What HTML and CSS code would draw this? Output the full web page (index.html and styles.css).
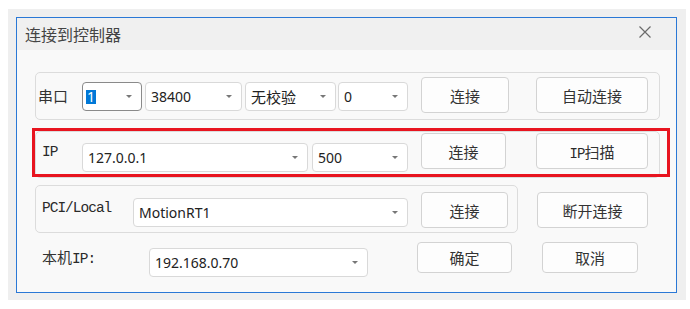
FILE: index.html
```html
<!DOCTYPE html>
<html lang="zh-CN">
<head>
    <meta charset="UTF-8">
    <title>连接到控制器</title>
    <link rel="stylesheet" href="styles.css">
</head>
<body>
    <div class="backdrop">
        <div class="dialog">
            <div class="titlebar">
                <span class="title">连接到控制器</span>
                <svg class="close" width="12" height="12" viewBox="0 0 12 12">
                    <path d="M0.5 0.5 L11.5 11.5 M11.5 0.5 L0.5 11.5" stroke="#6b6b6b" stroke-width="1.2" fill="none"/>
                </svg>
            </div>

            <div class="content">
                <!-- 串口 -->
                <div class="group row-serial">
                    <span class="label">串口</span>
                    <div class="combo combo-port focus"><span class="sel">1</span><i class="arrow"></i></div>
                    <div class="combo combo-baud"><span>38400</span><i class="arrow"></i></div>
                    <div class="combo combo-parity"><span class="cjk">无校验</span><i class="arrow"></i></div>
                    <div class="combo combo-stop"><span>0</span><i class="arrow"></i></div>
                    <button class="btn btn-connect">连接</button>
                    <button class="btn btn-wide">自动连接</button>
                </div>

                <!-- IP -->
                <div class="group row-ip">
                    <span class="label mono">IP</span>
                    <div class="combo combo-ip"><span>127.0.0.1</span><i class="arrow"></i></div>
                    <div class="combo combo-portnum"><span>500</span><i class="arrow"></i></div>
                    <button class="btn btn-connect-ip">连接</button>
                    <button class="btn btn-wide btn-scan"><span class="mono">IP</span>扫描</button>
                </div>

                <!-- PCI/Local -->
                <div class="row-pci">
                    <div class="group group-pci">
                        <span class="label mono">PCI/Local</span>
                        <div class="combo combo-pci"><span>MotionRT1</span><i class="arrow"></i></div>
                        <button class="btn btn-connect-pci">连接</button>
                    </div>
                    <button class="btn btn-disconnect">断开连接</button>
                </div>

                <!-- 本机IP -->
                <div class="row-local">
                    <span class="label">本机<span class="mono">IP:</span></span>
                    <div class="combo combo-local"><span>192.168.0.70</span><i class="arrow"></i></div>
                    <button class="btn btn-ok">确定</button>
                    <button class="btn btn-cancel">取消</button>
                </div>
            </div>

            <div class="highlight"></div>
        </div>
    </div>
</body>
</html>
```

FILE: styles.css
```css
body { margin: 0; background: #fff; font-family: "Noto Sans", "Noto Sans CJK SC", sans-serif; color: #333; }
.backdrop { margin: 9px 4px 9px 8px; padding: 8px 9px 7px 8px; background: #efefef; }

.dialog { position: relative; width: 661px; height: 276px; box-sizing: border-box; border: 1px solid #2a78d6; background: #f9f9f9; }
.titlebar { height: 32px; background: #f0f0f0; display: flex; align-items: center; justify-content: space-between; padding: 0 25px 0 8px; }
.title { font-family: "Noto Sans CJK SC", sans-serif; font-size: 16px; color: #444; }
.close { display: block; margin-top: -4px; }

.content { padding-left: 18px; }

.label { font-family: "Noto Sans CJK SC", sans-serif; font-size: 15px; line-height: 16px; color: #333; flex: none; }
.mono { font-family: "Liberation Mono", monospace; font-size: 14.5px; letter-spacing: -1px; color: #2a2a2a; }
.cjk { font-family: "Noto Sans CJK SC", sans-serif; font-size: 15px; }

.group { box-sizing: border-box; width: 625px; border: 1px solid #dcdcdc; border-radius: 5px; display: flex; align-items: flex-start; }

.combo { box-sizing: border-box; height: 29px; background: #fff; border: 1px solid #d9d9d9; border-radius: 4px; display: flex; align-items: center; justify-content: space-between; padding: 0 9px 0 5px; font-size: 14px; color: #222; flex: none; }
.combo.focus { border-color: #8a8a8a; padding-left: 3px; }
.sel { background: #0078d7; color: #fff; padding: 0 1px; line-height: 14px; }
.arrow { width: 0; height: 0; border-left: 3px solid transparent; border-right: 3px solid transparent; border-top: 3px solid #777; }

.btn { box-sizing: border-box; height: 36px; background: #fdfdfd; border: 1px solid #d3d3d3; border-radius: 4px; font-family: "Noto Sans CJK SC", sans-serif; font-size: 15px; color: #333; padding: 0; flex: none; }
.btn .mono { font-size: 14px; }

/* row 1 */
.row-serial { margin-top: 22px; height: 48px; }
.row-serial .label { margin: 15px 0 0 2px; width: 44px; }
.row-serial .combo { margin-top: 9px; }
.row-serial .btn { margin-top: 4px; }
.combo-port { width: 60px; }
.combo-baud { width: 97px; margin-left: 3px; }
.combo-parity { width: 91px; margin-left: 3px; }
.combo-stop { width: 70px; margin-left: 2px; }
.btn-connect { width: 88px; margin-left: 13px; }
.btn-wide { width: 112px; margin-left: 27px; }

/* row 2 */
.row-ip { margin-top: 11px; height: 47px; }
.row-ip .label { margin: 12px 0 0 6px; width: 40px; }
.row-ip .combo { margin-top: 11px; }
.row-ip .btn { margin-top: 1px; }
.combo-ip { width: 226px; }
.combo-portnum { width: 96px; margin-left: 4px; }
.btn-connect-ip { width: 85px; margin-left: 13px; }
.btn-scan { margin-left: 30px; }

/* row 3 */
.row-pci { margin-top: 7px; height: 48px; display: flex; align-items: flex-start; }
.group-pci { width: 483px; height: 48px; }
.group-pci .label { margin: 14px 0 0 6px; width: 91px; }
.combo-pci { width: 275px; margin-top: 12px; }
.btn-connect-pci { width: 87px; margin: 6px 0 0 13px; }
.btn-disconnect { width: 111px; margin: 7px 0 0 19px; }

/* row 4 */
.row-local { margin-top: 9px; height: 35px; display: flex; align-items: flex-start; }
.row-local .label { margin: 7px 0 0 7px; width: 107px; }
.combo-local { width: 219px; margin-top: 6px; }
.btn-ok { width: 95px; height: 31px; margin-left: 49px; }
.btn-cancel { width: 96px; height: 31px; margin-left: 30px; }

/* red annotation frame over the IP row */
.highlight { position: absolute; left: 15px; top: 110px; width: 638px; height: 49px; box-sizing: border-box; border: 3px solid #e8141f; }
```
